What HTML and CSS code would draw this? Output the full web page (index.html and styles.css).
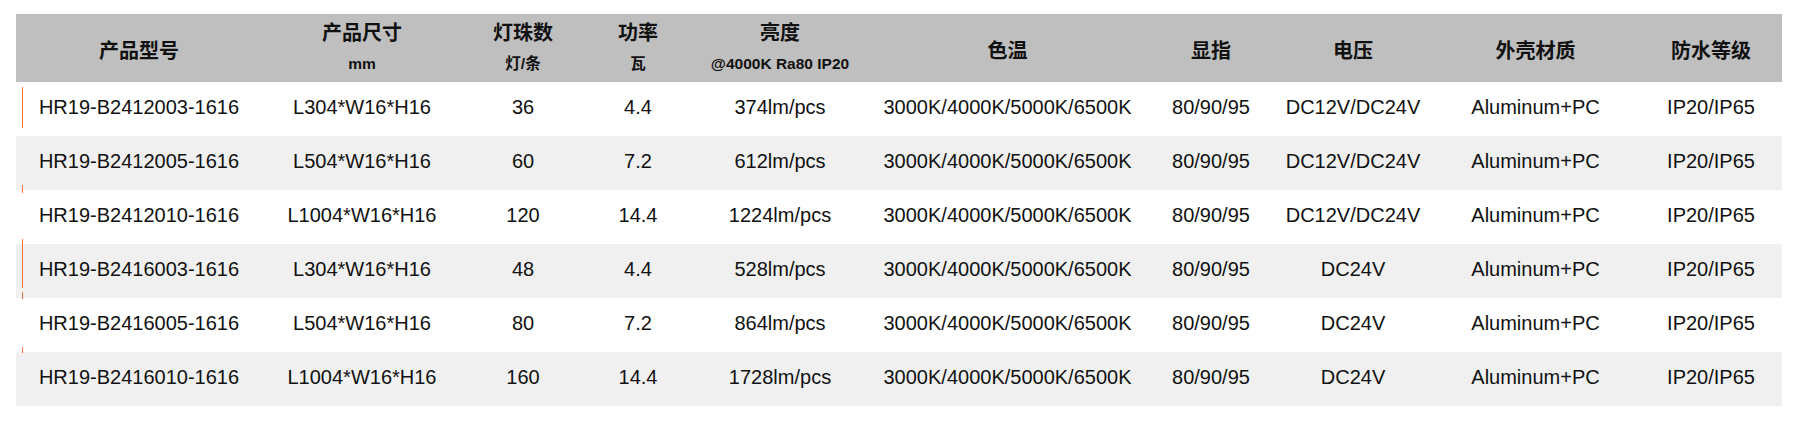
FILE: index.html
```html
<!DOCTYPE html>
<html lang="zh-CN">
<head>
<meta charset="utf-8">
<title>产品参数</title>
<link rel="stylesheet" href="styles.css">
</head>
<body>
<div class="page">
  <div class="table-wrap">
    <table class="spec">
      <colgroup>
        <col class="c1"><col class="c2"><col class="c3"><col class="c4"><col class="c5">
        <col class="c6"><col class="c7"><col class="c8"><col class="c9"><col class="c10">
      </colgroup>
      <thead>
        <tr>
          <th class="single"><span class="main">产品型号</span></th>
          <th><span class="main">产品尺寸</span><span class="sub">mm</span></th>
          <th><span class="main">灯珠数</span><span class="sub">灯/条</span></th>
          <th><span class="main">功率</span><span class="sub">瓦</span></th>
          <th><span class="main">亮度</span><span class="sub">@4000K Ra80 IP20</span></th>
          <th class="single"><span class="main">色温</span></th>
          <th class="single"><span class="main">显指</span></th>
          <th class="single"><span class="main">电压</span></th>
          <th class="single"><span class="main">外壳材质</span></th>
          <th class="single"><span class="main">防水等级</span></th>
        </tr>
      </thead>
      <tbody>
        <tr>
          <td>HR19-B2412003-1616</td><td>L304*W16*H16</td><td>36</td><td>4.4</td><td>374lm/pcs</td>
          <td>3000K/4000K/5000K/6500K</td><td>80/90/95</td><td>DC12V/DC24V</td><td>Aluminum+PC</td><td>IP20/IP65</td>
        </tr>
        <tr class="alt">
          <td>HR19-B2412005-1616</td><td>L504*W16*H16</td><td>60</td><td>7.2</td><td>612lm/pcs</td>
          <td>3000K/4000K/5000K/6500K</td><td>80/90/95</td><td>DC12V/DC24V</td><td>Aluminum+PC</td><td>IP20/IP65</td>
        </tr>
        <tr>
          <td>HR19-B2412010-1616</td><td>L1004*W16*H16</td><td>120</td><td>14.4</td><td>1224lm/pcs</td>
          <td>3000K/4000K/5000K/6500K</td><td>80/90/95</td><td>DC12V/DC24V</td><td>Aluminum+PC</td><td>IP20/IP65</td>
        </tr>
        <tr class="alt">
          <td>HR19-B2416003-1616</td><td>L304*W16*H16</td><td>48</td><td>4.4</td><td>528lm/pcs</td>
          <td>3000K/4000K/5000K/6500K</td><td>80/90/95</td><td>DC24V</td><td>Aluminum+PC</td><td>IP20/IP65</td>
        </tr>
        <tr>
          <td>HR19-B2416005-1616</td><td>L504*W16*H16</td><td>80</td><td>7.2</td><td>864lm/pcs</td>
          <td>3000K/4000K/5000K/6500K</td><td>80/90/95</td><td>DC24V</td><td>Aluminum+PC</td><td>IP20/IP65</td>
        </tr>
        <tr class="alt">
          <td>HR19-B2416010-1616</td><td>L1004*W16*H16</td><td>160</td><td>14.4</td><td>1728lm/pcs</td>
          <td>3000K/4000K/5000K/6500K</td><td>80/90/95</td><td>DC24V</td><td>Aluminum+PC</td><td>IP20/IP65</td>
        </tr>
      </tbody>
    </table>
    <span class="mark m1"></span>
    <span class="mark m2"></span>
    <span class="mark m3"></span>
    <span class="mark m4"></span>
    <span class="mark m5"></span>
  </div>
</div>
</body>
</html>
```
FILE: styles.css
```css
html, body {
  margin: 0;
  padding: 0;
  background: #ffffff;
}

.page {
  padding: 14px 21px 0 16px;
}

.table-wrap {
  position: relative;
  width: 1766px;
}

.spec {
  width: 1766px;
  table-layout: fixed;
  border-collapse: collapse;
  border-spacing: 0;
  font-family: "Liberation Sans", Arial, "Noto Sans CJK SC", sans-serif;
  color: #111111;
}

.c1 { width: 246px; }
.c2 { width: 200px; }
.c3 { width: 122px; }
.c4 { width: 108px; }
.c5 { width: 176px; }
.c6 { width: 279px; }
.c7 { width: 128px; }
.c8 { width: 156px; }
.c9 { width: 209px; }
.c10 { width: 142px; }

.spec thead tr {
  height: 68px;
}

.spec th {
  background: #bfbfbf;
  height: 68px;
  padding: 0;
  box-sizing: border-box;
  vertical-align: top;
  text-align: center;
  font-weight: 700;
  overflow: hidden;
}

.spec th .main {
  display: block;
  font-family: "Noto Sans CJK SC", "Liberation Sans", sans-serif;
  font-size: 20px;
  font-weight: 700;
  line-height: 33px;
  padding-top: 1px;
}

.spec th .sub {
  display: block;
  font-family: "Liberation Sans", Arial, "Noto Sans CJK SC", sans-serif;
  font-size: 15.5px;
  font-weight: 700;
  line-height: 32px;
}

.spec th.single .main {
  line-height: 65px;
  padding-top: 3px;
}

.spec td {
  height: 54px;
  padding: 0 0 3px 0;
  box-sizing: border-box;
  text-align: center;
  vertical-align: middle;
  font-size: 20px;
  white-space: nowrap;
}

.spec tr.alt td {
  background: #f0f0f0;
}

.mark {
  position: absolute;
  left: 6px;
  width: 1px;
  background: #ef7536;
}

.m1 { top: 73px; height: 41px; }
.m2 { top: 171px; height: 8px; }
.m3 { top: 225px; height: 49px; }
.m4 { top: 278px; height: 7px; }
.m5 { top: 333px; height: 6px; }
```
